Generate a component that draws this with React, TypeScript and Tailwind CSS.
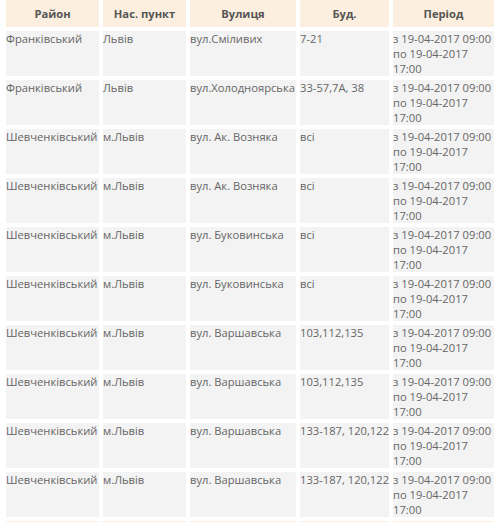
import React from "react";

const period = "з 19-04-2017 09:00 по 19-04-2017 17:00";
const rows: string[][] = [
  ["Франківський", "Львів", "вул.Сміливих", "7-21"],
  ["Франківський", "Львів", "вул.Холодноярська", "33-57,7А, 38"],
  ["Шевченківський", "м.Львів", "вул. Ак. Возняка", "всі"],
  ["Шевченківський", "м.Львів", "вул. Ак. Возняка", "всі"],
  ["Шевченківський", "м.Львів", "вул. Буковинська", "всі"],
  ["Шевченківський", "м.Львів", "вул. Буковинська", "всі"],
  ["Шевченківський", "м.Львів", "вул. Варшавська", "103,112,135"],
  ["Шевченківський", "м.Львів", "вул. Варшавська", "103,112,135"],
  ["Шевченківський", "м.Львів", "вул. Варшавська", "133-187, 120,122"],
  ["Шевченківський", "м.Львів", "вул. Варшавська", "133-187, 120,122"],
];
const headers = ["Район", "Нас. пункт", "Вулиця", "Буд.", "Період"];

export default function App() {
  return (
    <div
      className="w-[496px] h-[522px] overflow-hidden bg-white pl-[6px]"
      style={{ fontFamily: '"Open Sans", sans-serif' }}
    >
      <div className="grid grid-cols-[93px_83px_106px_89px_101px] gap-[4px] text-[11.2px] leading-[15px]">
        {headers.map((h) => (
          <div
            key={h}
            className="h-[27px] bg-[#fcefdf] flex items-center justify-center font-bold text-[#555555]"
          >
            {h}
          </div>
        ))}
        {rows.map((r, i) => (
          <React.Fragment key={i}>
            {[...r, period].map((c, j) => (
              <div
                key={j}
                className={
                  j < 4
                    ? "h-[45px] bg-[#f3f3f3] text-[#666666] whitespace-nowrap"
                    : "h-[45px] bg-[#f3f3f3] text-[#666666]"
                }
              >
                {c}
              </div>
            ))}
          </React.Fragment>
        ))}
        {headers.map((h) => (
          <div key={"b" + h} className="h-[27px] bg-[#fcefdf]" />
        ))}
      </div>
    </div>
  );
}
